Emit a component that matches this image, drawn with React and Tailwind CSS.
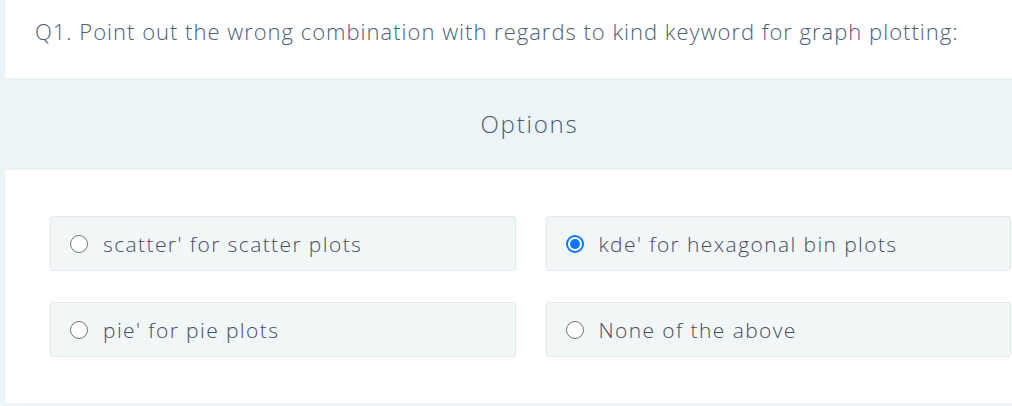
import React from "react";

const options = [
  { label: "scatter' for scatter plots", checked: false },
  { label: "kde' for hexagonal bin plots", checked: true },
  { label: "pie' for pie plots", checked: false },
  { label: "None of the above", checked: false },
];

function Radio({ checked }) {
  if (checked) {
    return (
      <span className="flex h-[18px] w-[18px] shrink-0 items-center justify-center rounded-full border-[2px] border-[#0a75ff] bg-white">
        <span className="h-[10px] w-[10px] rounded-full bg-[#0a75ff]" />
      </span>
    );
  }
  return (
    <span className="h-[18px] w-[18px] shrink-0 rounded-full border border-[#767676] bg-white" />
  );
}

export default function App() {
  return (
    <div
      className="h-[406px] w-[1012px] bg-[#edf4f8] pl-[5px] pb-[3px]"
      style={{ fontFamily: "'Open Sans', 'Noto Sans', sans-serif" }}
    >
      <div className="flex h-[403px] flex-col bg-white">
        <div className="h-[78px] pl-[30px] pt-[16px] text-[22px] font-light leading-[30px] tracking-[1px] text-[#4a6076]">
          Q1. Point out the wrong combination with regards to kind keyword for graph plotting:
        </div>
        <div className="flex h-[92px] items-center justify-center bg-[#edf4f7] pl-[42px] text-[24px] font-light tracking-[1.8px] text-[#4a5d72]">
          Options
        </div>
        <div className="grid grid-cols-2 gap-x-[30px] gap-y-[31px] pl-[45px] pr-[1px] pt-[46px]">
          {options.map((o) => (
            <div
              key={o.label}
              className="flex h-[55px] items-center gap-[15px] rounded-[3px] border border-[#e1e7ea] bg-[#f1f6f7] pl-[19px]"
            >
              <Radio checked={o.checked} />
              <span className="mt-[2px] text-[21px] font-light tracking-[1.4px] text-[#474c62]">{o.label}</span>
            </div>
          ))}
        </div>
      </div>
    </div>
  );
}
